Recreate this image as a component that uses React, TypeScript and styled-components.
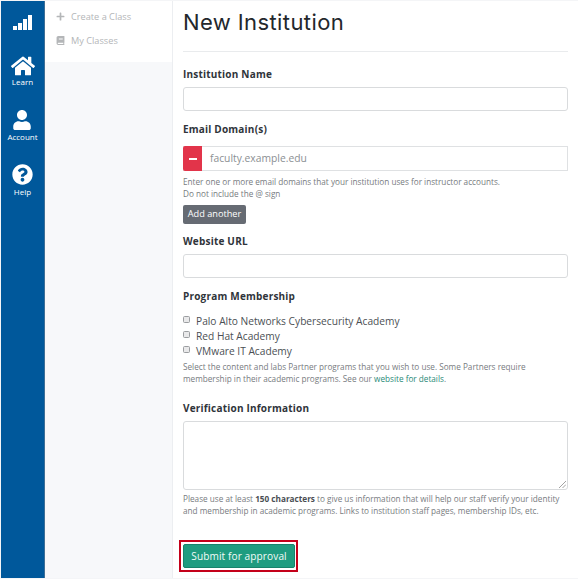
import React from "react";
import styled, { createGlobalStyle } from "styled-components";
import { FaHome, FaUser, FaQuestionCircle, FaPlus, FaBook } from "react-icons/fa";

const Global = createGlobalStyle`
  html, body { margin: 0; padding: 0; background: #fff; }
  body { width: 578px; height: 579px; overflow: hidden; font-family: "Open Sans", "Liberation Sans", sans-serif; }
  * { box-sizing: border-box; }
`;

const Page = styled.div`
  display: flex;
  width: 578px;
  height: 579px;
  padding: 1px 0 1px 1px;
  background: #f4f5f7;
`;

const Rail = styled.nav`
  width: 44px;
  flex: none;
  background: #00589b;
  border-right: 1px solid #3f6f96;
  display: flex;
  flex-direction: column;
  align-items: center;
  padding-top: 13px;
  color: #fff;
`;

const RailItem = styled.div<{ $gap: number; $iconGap: number }>`
  display: flex;
  flex-direction: column;
  align-items: center;
  margin-bottom: ${(p) => p.$gap}px;
  font-size: 8px;
  line-height: 10px;
  svg { display: block; margin-bottom: ${(p) => p.$iconGap}px; }
`;

const SubNav = styled.aside`
  width: 128px;
  flex: none;
  background: #f7f8fa;
  border-right: 1px solid #eceef1;
`;

const SubList = styled.div`
  height: 61px;
  background: #fff;
  padding-top: 3px;
`;

const SubItem = styled.div`
  display: flex;
  align-items: center;
  height: 24px;
  padding-left: 11px;
  gap: 6px;
  font-size: 9.2px;
  color: #b4b6b8;
  svg { flex: none; width: 9px; }
`;

const Main = styled.main`
  flex: 1;
  padding: 0 10px;
  background: #fff;
  color: #33373d;
`;

const Title = styled.h1`
  margin: 0;
  padding: 7px 0 14px;
  font: 400 22px/29px Inter, "Open Sans", sans-serif;
  letter-spacing: 0.4px;
  color: #23272c;
  border-bottom: 1px solid #e9ebed;
`;

const Field = styled.div<{ $top: number }>`
  margin-top: ${(p) => p.$top}px;
`;

const Label = styled.div`
  font-size: 10px;
  line-height: 14px;
  font-weight: 700;
  letter-spacing: 0.2px;
  color: #2f343a;
`;

const TextBox = styled.div<{ $h: number; $mt: number }>`
  height: ${(p) => p.$h}px;
  margin-top: ${(p) => p.$mt}px;
  background: #fff;
  border: 1px solid #d9dbdd;
  border-radius: 3px;
  position: relative;
`;

const Grip = styled.svg`
  position: absolute;
  right: 1px;
  bottom: 1px;
`;

const Group = styled.div`
  display: flex;
  height: 25px;
  margin-top: 10px;
  border: 1px solid #dfe1e3;
  border-left: 0;
`;

const Remove = styled.div`
  width: 19px;
  margin: -1px 0;
  background: #e2344a;
  border-radius: 2px 0 0 2px;
  display: flex;
  align-items: center;
  justify-content: center;
  &::before { content: ""; width: 8px; height: 2px; background: #fff; }
`;

const Placeholder = styled.div`
  padding-left: 8px;
  font-size: 10.3px;
  line-height: 23px;
  color: #8b8f93;
`;

const Help = styled.div<{ $mt: number }>`
  margin-top: ${(p) => p.$mt}px;
  font-size: 8.2px;
  line-height: 12px;
  color: #777b80;
  white-space: nowrap;
  strong { color: #4a4e53; font-weight: 700; }
  a { color: #2a8a78; text-decoration: none; }
`;

const Secondary = styled.div`
  display: inline-block;
  width: 63px;
  height: 19px;
  margin-top: 5px;
  background: #666b73;
  color: #fff;
  border-radius: 2px;
  text-align: center;
  font-size: 9.2px;
  line-height: 18px;
`;

const Checks = styled.div`
  margin-top: 10px;
`;

const CheckRow = styled.label`
  display: flex;
  align-items: center;
  height: 15px;
  gap: 6px;
  font-size: 10.2px;
  color: #4b4f54;
`;

const Box = styled.span`
  width: 7px;
  height: 7px;
  margin-bottom: 2px;
  background: #e9e9ea;
  border: 1px solid #9b9da0;
  border-radius: 1.5px;
`;

const Highlight = styled.div`
  width: 119px;
  height: 32px;
  margin: 23px 0 0 -4px;
  border: 2px solid #c4001a;
  padding: 2px 1px 2px 2px;
  background: #fff;
`;

const Submit = styled.div`
  height: 24px;
  background: #1f9c80;
  border: 1px solid #17836b;
  border-radius: 2px;
  color: #f2fbf8;
  text-align: center;
  font-size: 10.1px;
  line-height: 22px;
  letter-spacing: 0.1px;
`;

const Bars = () => (
  <svg width="19" height="17" viewBox="0 0 19 17" fill="#fff">
    <rect x="0" y="12" width="4" height="4" />
    <rect x="5" y="9" width="4" height="7" />
    <rect x="10" y="5" width="4" height="11" />
    <rect x="15" y="1" width="4" height="15" />
  </svg>
);

export default function App() {
  return (
    <Page>
      <Global />
      <Rail>
        <RailItem $gap={21} $iconGap={2}><Bars /></RailItem>
        <RailItem $gap={23} $iconGap={-1}><FaHome size={24} />Learn</RailItem>
        <RailItem $gap={22} $iconGap={2}><FaUser size={20} />Account</RailItem>
        <RailItem $gap={0} $iconGap={2}><FaQuestionCircle size={21} />Help</RailItem>
      </Rail>
      <SubNav>
        <SubList>
          <SubItem><FaPlus size={9} />Create a Class</SubItem>
          <SubItem><FaBook size={9} />My Classes</SubItem>
        </SubList>
      </SubNav>
      <Main>
        <Title>New Institution</Title>
        <Field $top={15}>
          <Label>Institution Name</Label>
          <TextBox $h={24} $mt={6} />
        </Field>
        <Field $top={11}>
          <Label>Email Domain(s)</Label>
          <Group>
            <Remove />
            <Placeholder>faculty.example.edu</Placeholder>
          </Group>
          <Help $mt={5}>
            Enter one or more email domains that your institution uses for instructor accounts.
            <br />
            Do not include the @ sign
          </Help>
          <Secondary>Add another</Secondary>
        </Field>
        <Field $top={10}>
          <Label>Website URL</Label>
          <TextBox $h={24} $mt={6} />
        </Field>
        <Field $top={11}>
          <Label>Program Membership</Label>
          <Checks>
            <CheckRow><Box />Palo Alto Networks Cybersecurity Academy</CheckRow>
            <CheckRow><Box />Red Hat Academy</CheckRow>
            <CheckRow><Box />VMware IT Academy</CheckRow>
          </Checks>
          <Help $mt={3}>
            Select the content and labs Partner programs that you wish to use. Some Partners require
            <br />
            membership in their academic programs. See our <a href="#">website for details</a>.
          </Help>
        </Field>
        <Field $top={16}>
          <Label>Verification Information</Label>
          <TextBox $h={69} $mt={6}>
            <Grip width="8" height="8" viewBox="0 0 8 8" stroke="#8a8a8a" strokeWidth="0.8">
              <path d="M1 8 8 1M4.5 8 8 4.5" />
            </Grip>
          </TextBox>
          <Help $mt={3}>
            Please use at least <strong>150 characters</strong> to give us information that will help our staff verify your identity
            <br />
            and membership in academic programs. Links to institution staff pages, membership IDs, etc.
          </Help>
        </Field>
        <Highlight>
          <Submit>Submit for approval</Submit>
        </Highlight>
      </Main>
    </Page>
  );
}
